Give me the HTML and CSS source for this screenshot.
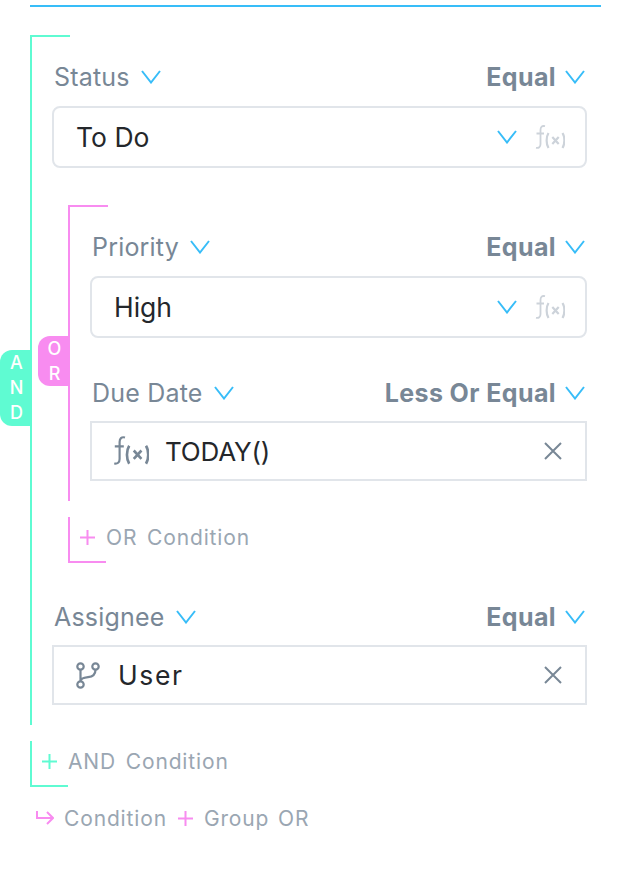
FILE: index.html
```html
<!DOCTYPE html>
<html lang="en">
<head>
<meta charset="utf-8">
<title>Conditions</title>
<link rel="stylesheet" href="styles.css">
</head>
<body>
<svg class="defs" width="0" height="0" aria-hidden="true">
  <symbol id="chev" viewBox="0 0 20 14"><path d="M1 1 10 12.500 19 1" fill="none" stroke="currentColor" stroke-width="2"/></symbol>
  <symbol id="fx" viewBox="0 0 30 24">
    <path d="M10 1.200C7 .4 5.500 2 5.500 5v14c0 3-1.700 4.300-4.500 3.800M1.500 8.500h7.500" fill="none" stroke="currentColor" stroke-width="1.800"/>
    <path d="M13.500 8c-2.500 4-2.500 11 0 15M27.500 8c2.500 4 2.500 11 0 15M17.300 12l6.400 7M23.700 12l-6.400 7" fill="none" stroke="currentColor" stroke-width="2.200"/>
  </symbol>
  <symbol id="cross" viewBox="0 0 20 20"><path d="M2 2 18 18M18 2 2 18" fill="none" stroke="currentColor" stroke-width="2"/></symbol>
  <symbol id="plus" viewBox="0 0 15 15"><path d="M0 7.500H15M7.500 0V15" fill="none" stroke="currentColor" stroke-width="2"/></symbol>
  <symbol id="branch" viewBox="0 0 24 27">
    <g fill="none" stroke="currentColor" stroke-width="2.200">
      <circle cx="4.500" cy="4.500" r="3.200"/><circle cx="4.500" cy="22.500" r="3.200"/><circle cx="19.500" cy="4.500" r="3.200"/>
      <path d="M4.500 7.700V19.300M19.500 7.700c0 4.800-3 7-7.500 7.500-4 .4-7.500 1-7.500 4"/>
    </g>
  </symbol>
  <symbol id="hook" viewBox="0 0 18 14"><path d="M1 0V7H16.500M11 1 17 7 11 13" fill="none" stroke="currentColor" stroke-width="2"/></symbol>
</svg>

<div class="topline"></div>

<section class="group group-and">
  <span class="badge badge-and"><span>A</span><span>N</span><span>D</span></span>

  <div class="field">
    <div class="head">
      <span class="label">Status <svg class="chev"><use href="#chev"/></svg></span>
      <span class="op">Equal <svg class="chev"><use href="#chev"/></svg></span>
    </div>
    <div class="box rounded">
      <span class="value">To Do</span>
      <svg class="chev"><use href="#chev"/></svg>
      <svg class="fx fx-off"><use href="#fx"/></svg>
    </div>
  </div>

  <section class="group group-or">
    <span class="badge badge-or"><span>O</span><span>R</span></span>

    <div class="field">
      <div class="head">
        <span class="label">Priority <svg class="chev"><use href="#chev"/></svg></span>
        <span class="op">Equal <svg class="chev"><use href="#chev"/></svg></span>
      </div>
      <div class="box rounded">
        <span class="value">High</span>
        <svg class="chev"><use href="#chev"/></svg>
        <svg class="fx fx-off"><use href="#fx"/></svg>
      </div>
    </div>

    <div class="field field-date">
      <div class="head">
        <span class="label">Due Date <svg class="chev"><use href="#chev"/></svg></span>
        <span class="op">Less Or Equal <svg class="chev"><use href="#chev"/></svg></span>
      </div>
      <div class="box square">
        <svg class="fx fx-on"><use href="#fx"/></svg>
        <span class="value value-mono">TODAY()</span>
        <svg class="cross"><use href="#cross"/></svg>
      </div>
    </div>
  </section>

  <div class="adder adder-or">
    <svg class="plus"><use href="#plus"/></svg>
    <span>OR Condition</span>
  </div>

  <div class="field field-assignee">
    <div class="head">
      <span class="label">Assignee <svg class="chev"><use href="#chev"/></svg></span>
      <span class="op">Equal <svg class="chev"><use href="#chev"/></svg></span>
    </div>
    <div class="box square">
      <svg class="branch"><use href="#branch"/></svg>
      <span class="value value-user">User</span>
      <svg class="cross"><use href="#cross"/></svg>
    </div>
  </div>
</section>

<div class="adder adder-and">
  <svg class="plus"><use href="#plus"/></svg>
  <span>AND Condition</span>
</div>

<div class="actions">
  <svg class="hook"><use href="#hook"/></svg>
  <span>Condition</span>
  <svg class="plus"><use href="#plus"/></svg>
  <span>Group OR</span>
</div>
</body>
</html>
```

FILE: styles.css
```css
* { box-sizing: border-box; }

html, body { margin: 0; padding: 0; background: #fff; }

body {
  width: 620px;
  height: 892px;
  overflow: hidden;
  font-family: Inter, "Liberation Sans", sans-serif;
  color: #788796;
}

.defs { position: absolute; }

.topline {
  height: 2px;
  width: 571px;
  margin: 5px 0 0 30px;
  background: #38bdf8;
}

.group { position: relative; }

.group::before {
  content: "";
  position: absolute;
  left: 0;
  top: 0;
  width: 40px;
  height: 2px;
}

.group-and {
  width: 557px;
  height: 690px;
  margin: 28px 0 0 30px;
  padding: 28px 0 0 20px;
  border-left: 2px solid #5ffbd2;
}
.group-and::before { left: -2px; background: #5ffbd2; }

.group-or {
  width: 519px;
  height: 296px;
  margin: 37px 0 0 16px;
  padding: 28px 0 0 20px;
  border-left: 2px solid #f88cf0;
}
.group-or::before { left: -2px; background: #f88cf0; }

.badge {
  position: absolute;
  display: flex;
  flex-direction: column;
  align-items: center;
  padding-left: 3px;
  color: #fff;
  font-size: 18px;
  font-weight: 500;
  line-height: 25px;
}
.badge-and {
  left: -32px;
  top: 315px;
  width: 30px;
  height: 76px;
  background: #5ffbd2;
  border-radius: 12px 0 0 12px;
}
.badge-or {
  left: -32px;
  top: 131px;
  width: 30px;
  height: 50px;
  background: #f88cf0;
  border-radius: 12px 0 0 12px;
}

.head {
  display: flex;
  justify-content: space-between;
  align-items: center;
  height: 28px;
  padding: 0 2px;
  font-size: 25px;
  line-height: 28px;
  margin-bottom: 15px;
}
.label { display: flex; align-items: center; gap: 11px; font-weight: 400; letter-spacing: 0.2px; }
.op { display: flex; align-items: center; gap: 9px; font-weight: 700; letter-spacing: 0.4px; }

.chev {
  width: 20px;
  height: 14px;
  color: #38bdf8;
  flex: none;
}

.box {
  display: flex;
  align-items: center;
  background: #fff;
  border: 2px solid #e1e5ea;
}
.rounded { height: 62px; border-radius: 8px; padding: 0 20px 0 22px; }
.square { height: 60px; padding: 0 22px; }

.value { flex: 1; color: #24272b; font-size: 26.500px; }
.value-mono { margin-left: 16px; font-size: 26px; letter-spacing: -0.2px; }
.value-user { margin-left: 18px; letter-spacing: 1.6px; }

.fx { width: 30px; height: 24px; flex: none; }
.fx-off { margin-left: 18px; color: #cdd3da; }
.fx-on { width: 36px; height: 29px; margin-left: -1px; margin-bottom: 2px; color: #788796; }

.cross { width: 20px; height: 20px; color: #788796; flex: none; }
.branch { width: 24px; height: 27px; color: #788796; flex: none; }

.field-date { margin-top: 41px; }
.field-date .head { margin-bottom: 14px; }
.field-assignee { margin-top: 40px; }
.field-assignee .head { margin-bottom: 14px; }

.adder {
  display: flex;
  align-items: center;
  gap: 11px;
  width: 38px;
  height: 46px;
  padding: 0 0 4px 10px;
  white-space: nowrap;
  font-size: 21px;
  letter-spacing: 0.85px;
  word-spacing: 3px;
  color: #9aa6b2;
  border-left: 2px solid;
  border-bottom: 2px solid;
}
.adder-or { margin: 16px 0 0 16px; border-color: #f88cf0; }
.adder-or .plus { color: #f88cf0; }
.adder-and { margin: 16px 0 0 30px; border-color: #5ffbd2; }
.adder-and .plus { color: #5ffbd2; }

.plus { width: 15px; height: 15px; flex: none; }

.actions {
  display: flex;
  align-items: center;
  gap: 11px;
  margin: 18px 0 0 36px;
  height: 26px;
  font-size: 21px;
  letter-spacing: 0.85px;
  word-spacing: 2px;
  color: #9aa6b2;
}
.actions .plus { color: #f88cf0; }
.hook { width: 18px; height: 14px; margin-right: -1px; color: #f88cf0; flex: none; }
```
